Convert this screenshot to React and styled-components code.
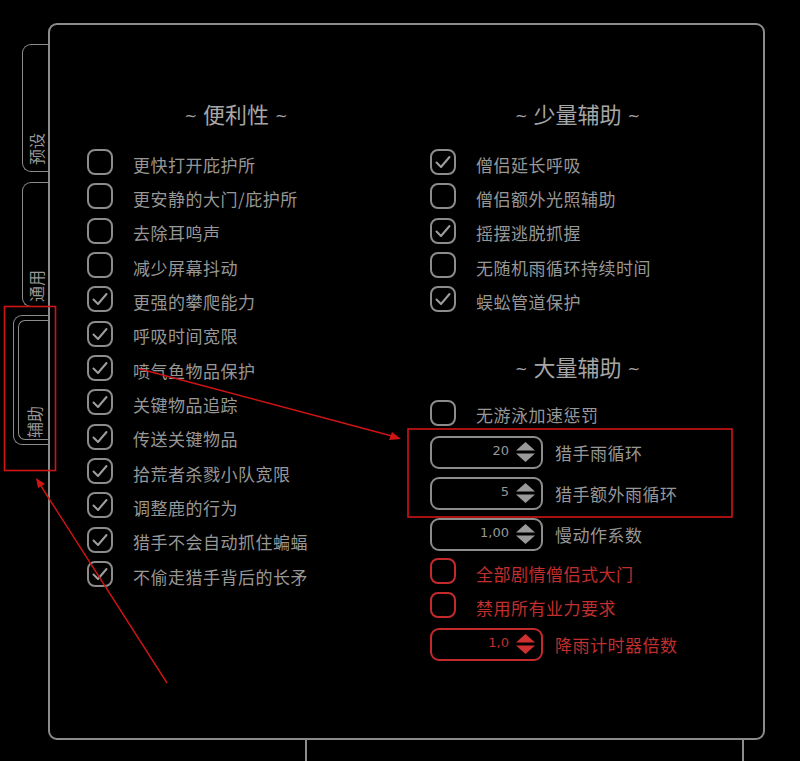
import styled, { createGlobalStyle } from "styled-components"

const GlobalStyle = createGlobalStyle`
  html, body {
    margin: 0;
    padding: 0;
    background: #000;
  }
  body {
    font-family: "Noto Sans CJK SC", "Noto Sans", sans-serif;
  }
`

const gray = "#979797"
const line = "#8c8c8c"
const red = "#c42a2c"

const Page = styled.div`
  position: relative;
  width: 800px;
  height: 761px;
  overflow: hidden;
  background: #000;
  box-sizing: border-box;
  padding-top: 23px;
`
const Stage = styled.div`
  display: flex;
  height: 717px;
`
const TabRail = styled.div`
  width: 48px;
  display: flex;
  flex-direction: column;
  align-items: flex-end;
  padding-top: 21px;
  box-sizing: border-box;
`
const Tab = styled.div`
  box-sizing: border-box;
  width: ${(p) => p.$w}px;
  height: ${(p) => p.$h}px;
  margin-bottom: ${(p) => p.$mb || 0}px;
  border: 1.5px solid ${line};
  border-right: none;
  border-radius: 9px 0 0 9px;
  display: flex;
  padding: ${(p) => (p.$active ? "4px 0 4px 4px" : "0")};
`
const TabFace = styled.div`
  flex: 1;
  box-sizing: border-box;
  border: ${(p) => (p.$active ? `1.5px solid ${line}` : "none")};
  border-right: none;
  border-radius: 7px 0 0 7px;
  display: flex;
  align-items: flex-end;
  justify-content: center;
  padding-bottom: ${(p) => p.$pb}px;
`
const TabLabel = styled.span`
  writing-mode: vertical-rl;
  text-orientation: sideways;
  transform: rotate(180deg);
  font-size: 16px;
  line-height: 18px;
  color: ${gray};
`
const Panel = styled.div`
  box-sizing: border-box;
  width: 717px;
  height: 717px;
  border: 2px solid ${line};
  border-radius: 9px;
  display: grid;
  grid-template-columns: 298px 295px;
  column-gap: 45px;
  align-content: start;
  padding: 73px 0 0 37px;
`
const Column = styled.div`
  display: flex;
  flex-direction: column;
`
const Heading = styled.div`
  text-align: center;
  font-size: 22px;
  line-height: 30px;
  color: #a6a6a6;
  margin-top: ${(p) => p.$mt || 0}px;
  margin-bottom: ${(p) => p.$mb}px;
`
const Tilde = styled.span`
  font-family: "DejaVu Sans", sans-serif;
  font-size: 15px;
  margin: 0 6px;
  vertical-align: 2px;
`
const Row = styled.div`
  display: flex;
  align-items: center;
  height: 34.33px;
  gap: 20px;
  margin-top: ${(p) => p.$mt || 0}px;
`
const Box = styled.div`
  box-sizing: border-box;
  width: 26px;
  height: 26px;
  flex: none;
  border: 2px solid ${(p) => (p.$danger ? red : line)};
  border-radius: 8px;
  display: flex;
  align-items: center;
  justify-content: center;
  margin-top: -4px;
`
const Label = styled.span`
  font-size: 17px;
  letter-spacing: 0.5px;
  color: ${(p) => (p.$danger ? "#c02e2e" : gray)};
  white-space: nowrap;
`
const InputRow = styled.div`
  display: flex;
  align-items: center;
  gap: 12px;
  margin-top: ${(p) => p.$mt}px;
`
const NumberBox = styled.div`
  box-sizing: border-box;
  width: 113px;
  height: 33px;
  border: 2px solid ${(p) => (p.$danger ? red : line)};
  border-radius: 9px;
  display: flex;
  align-items: center;
  justify-content: flex-end;
  gap: 7px;
  padding-right: 6px;
`
const Value = styled.span`
  font-family: "DejaVu Sans", sans-serif;
  font-size: 13px;
  margin-top: -3px;
  color: ${(p) => (p.$danger ? "#c02e2e" : gray)};
`
const Footer = styled.div`
  height: 21px;
  padding-left: 305px;
`
const FooterBox = styled.div`
  box-sizing: border-box;
  width: 439px;
  height: 100%;
  border-left: 2px solid ${line};
  border-right: 2px solid ${line};
`
const Annotations = styled.svg`
  position: absolute;
  left: 0;
  top: 0;
  pointer-events: none;
`

function Check() {
  return (
    <svg width="16" height="14" viewBox="0 0 16 14">
      <path d="M1.5 7.5 L6 12 L14.5 2" fill="none" stroke="#9e9e9e" strokeWidth="2" strokeLinecap="round" strokeLinejoin="round" />
    </svg>
  )
}

function Spinner({ danger }) {
  const c = danger ? "#d03032" : "#9a9a9a"
  return (
    <svg width="19" height="20" viewBox="0 0 19 20">
      <polygon points="9.5,0 19,8.5 0,8.5" fill={c} />
      <polygon points="0,11.5 19,11.5 9.5,20" fill={c} />
    </svg>
  )
}

function Option({ text, checked, danger, mt }) {
  return (
    <Row $mt={mt}>
      <Box $danger={danger}>{checked && <Check />}</Box>
      <Label $danger={danger}>{text}</Label>
    </Row>
  )
}

function NumberOption({ value, text, danger, mt }) {
  return (
    <InputRow $mt={mt}>
      <NumberBox $danger={danger}>
        <Value $danger={danger}>{value}</Value>
        <Spinner danger={danger} />
      </NumberBox>
      <Label $danger={danger}>{text}</Label>
    </InputRow>
  )
}

const convenience = [
  ["更快打开庇护所", false],
  ["更安静的大门/庇护所", false],
  ["去除耳鸣声", false],
  ["减少屏幕抖动", false],
  ["更强的攀爬能力", true],
  ["呼吸时间宽限", true],
  ["喷气鱼物品保护", true],
  ["关键物品追踪", true],
  ["传送关键物品", true],
  ["拾荒者杀戮小队宽限", true],
  ["调整鹿的行为", true],
  ["猎手不会自动抓住蝙蝠", true],
  ["不偷走猎手背后的长矛", true],
]

const minorAssist = [
  ["僧侣延长呼吸", true],
  ["僧侣额外光照辅助", false],
  ["摇摆逃脱抓握", true],
  ["无随机雨循环持续时间", false],
  ["蜈蚣管道保护", true],
]

export default function App() {
  return (
    <>
      <GlobalStyle />
      <Page>
        <Stage>
          <TabRail>
            <Tab $w={26} $h={128} $mb={10}>
              <TabFace $pb={6}><TabLabel>预设</TabLabel></TabFace>
            </Tab>
            <Tab $w={26} $h={125} $mb={8}>
              <TabFace $pb={4}><TabLabel>通用</TabLabel></TabFace>
            </Tab>
            <Tab $w={35} $h={130} $active>
              <TabFace $active $pb={1}><TabLabel>辅助</TabLabel></TabFace>
            </Tab>
          </TabRail>
          <Panel>
            <Column>
              <Heading $mb={16}><Tilde>~</Tilde>便利性<Tilde>~</Tilde></Heading>
              {convenience.map(([t, c]) => (
                <Option key={t} text={t} checked={c} />
              ))}
            </Column>
            <Column>
              <Heading $mb={16}><Tilde>~</Tilde>少量辅助<Tilde>~</Tilde></Heading>
              {minorAssist.map(([t, c]) => (
                <Option key={t} text={t} checked={c} />
              ))}
              <Heading $mt={32} $mb={14}><Tilde>~</Tilde>大量辅助<Tilde>~</Tilde></Heading>
              <Option text="无游泳加速惩罚" />
              <NumberOption value="20" text="猎手雨循环" mt={4} />
              <NumberOption value="5" text="猎手额外雨循环" mt={8} />
              <NumberOption value="1,00" text="慢动作系数" mt={8} />
              <Option text="全部剧情僧侣式大门" danger mt={5} />
              <Option text="禁用所有业力要求" danger />
              <NumberOption value="1,0" text="降雨计时器倍数" danger mt={3} />
            </Column>
          </Panel>
        </Stage>
        <Footer>
          <FooterBox />
        </Footer>
        <Annotations width="800" height="761" viewBox="0 0 800 761">
          <rect x="4.5" y="306.5" width="51" height="164" fill="none" stroke="#d01414" strokeWidth="1.6" />
          <rect x="408" y="429" width="324" height="88" fill="none" stroke="#d01414" strokeWidth="1.6" />
          <line x1="140" y1="369" x2="392" y2="436" stroke="#d01414" strokeWidth="1.4" />
          <polygon points="401,439 389,440 392,432" fill="#d01414" />
          <line x1="167" y1="683" x2="41" y2="486" stroke="#d01414" strokeWidth="1.4" />
          <polygon points="36,478 45,484 38,488" fill="#d01414" />
        </Annotations>
      </Page>
    </>
  )
}
